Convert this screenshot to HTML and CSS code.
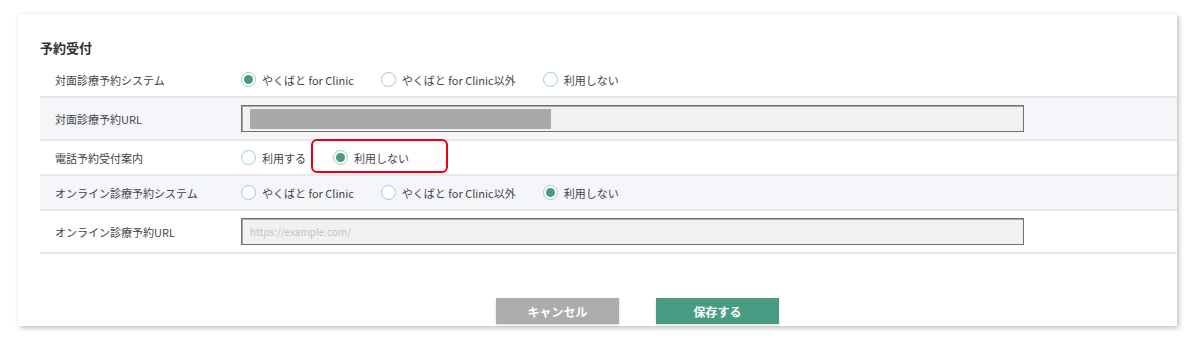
FILE: index.html
```html
<!DOCTYPE html>
<html lang="ja">
<head>
<meta charset="utf-8">
<title>予約受付</title>
<link rel="stylesheet" href="styles.css">
</head>
<body>
<div class="card">
  <h2 class="title">予約受付</h2>
  <div class="rows">
    <div class="row">
      <div class="label">対面診療予約システム</div>
      <div class="value">
        <span class="opt"><span class="radio on"></span>やくばと for Clinic</span>
        <span class="opt"><span class="radio"></span>やくばと for Clinic以外</span>
        <span class="opt"><span class="radio"></span>利用しない</span>
      </div>
    </div>
    <div class="row alt tall">
      <div class="label">対面診療予約URL</div>
      <div class="value">
        <div class="field"><span class="redact"></span></div>
      </div>
    </div>
    <div class="row">
      <div class="label">電話予約受付案内</div>
      <div class="value">
        <span class="opt"><span class="radio"></span>利用する</span>
        <span class="opt"><span class="radio on"></span>利用しない<span class="highlight"></span></span>
      </div>
    </div>
    <div class="row alt">
      <div class="label">オンライン診療予約システム</div>
      <div class="value">
        <span class="opt"><span class="radio"></span>やくばと for Clinic</span>
        <span class="opt"><span class="radio"></span>やくばと for Clinic以外</span>
        <span class="opt"><span class="radio on"></span>利用しない</span>
      </div>
    </div>
    <div class="row tall">
      <div class="label">オンライン診療予約URL</div>
      <div class="value">
        <div class="field"><span class="placeholder">https://example.com/</span></div>
      </div>
    </div>
  </div>
  <div class="actions">
    <button class="btn cancel">キャンセル</button>
    <button class="btn save">保存する</button>
  </div>
</div>
</body>
</html>
```

FILE: styles.css
```css
* { box-sizing: border-box; }
html, body { margin: 0; padding: 0; background: #ffffff; }
body {
  font-family: "Noto Sans CJK JP", "Noto Sans", sans-serif;
  color: #444;
  padding: 14px 20px 20px 18px;
}
.card {
  width: 1159px;
  height: 312px;
  background: #fff;
  box-shadow: 2px 2px 5px rgba(0,0,0,0.24), 0 0 2px rgba(0,0,0,0.06);
  padding: 24px 0 0 22px;
}
.title {
  margin: 0 0 5px 0;
  font-size: 13px;
  line-height: 20px;
  font-weight: 700;
  color: #333;
}
.rows { display: flex; flex-direction: column; }
.row {
  display: flex;
  align-items: center;
  height: 35px;
  border-bottom: 2px solid #e8e8e8;
  font-size: 11px;
}
.row.tall { height: 43px; }
.row.alt { background: #f5f6fa; }
.label {
  width: 201px;
  padding-left: 15px;
  color: #444;
}
.value {
  display: flex;
  align-items: center;
  gap: 27px;
}
.opt {
  display: inline-flex;
  align-items: center;
  gap: 6px;
  color: #444;
  position: relative;
}
.radio {
  width: 15px;
  height: 15px;
  border-radius: 50%;
  border: 1px solid #9fcfbf;
  background: #fff;
  display: inline-flex;
  align-items: center;
  justify-content: center;
}
.radio.on::after {
  content: "";
  width: 9px;
  height: 9px;
  border-radius: 50%;
  background: #4a9a80;
}
.highlight {
  position: absolute;
  left: -22px;
  top: -11px;
  width: 137px;
  height: 34px;
  border: 2.5px solid #e60012;
  border-radius: 6px;
}
.field {
  width: 783px;
  height: 27px;
  background: #f1f1f1;
  border: 1px solid #6f6f6f;
  box-shadow: inset 1px 1px 0 #a8a8a8;
  display: flex;
  align-items: center;
  padding-left: 8px;
}
.redact {
  display: block;
  width: 301px;
  height: 20px;
  background: #a9a9a9;
}
.placeholder {
  font-size: 10px;
  color: #c3c3c3;
}
.actions {
  display: flex;
  gap: 37px;
  padding: 44px 0 0 456px;
}
.btn {
  width: 123px;
  height: 26px;
  border: none;
  font-family: "Noto Sans CJK JP", "Noto Sans", sans-serif;
  font-size: 12px;
  font-weight: 700;
  color: #fff;
  box-shadow: 0 1px 3px rgba(0,0,0,0.15);
  padding: 0;
}
.cancel { background: #acacac; }
.save { background: #4a9b83; }
```
